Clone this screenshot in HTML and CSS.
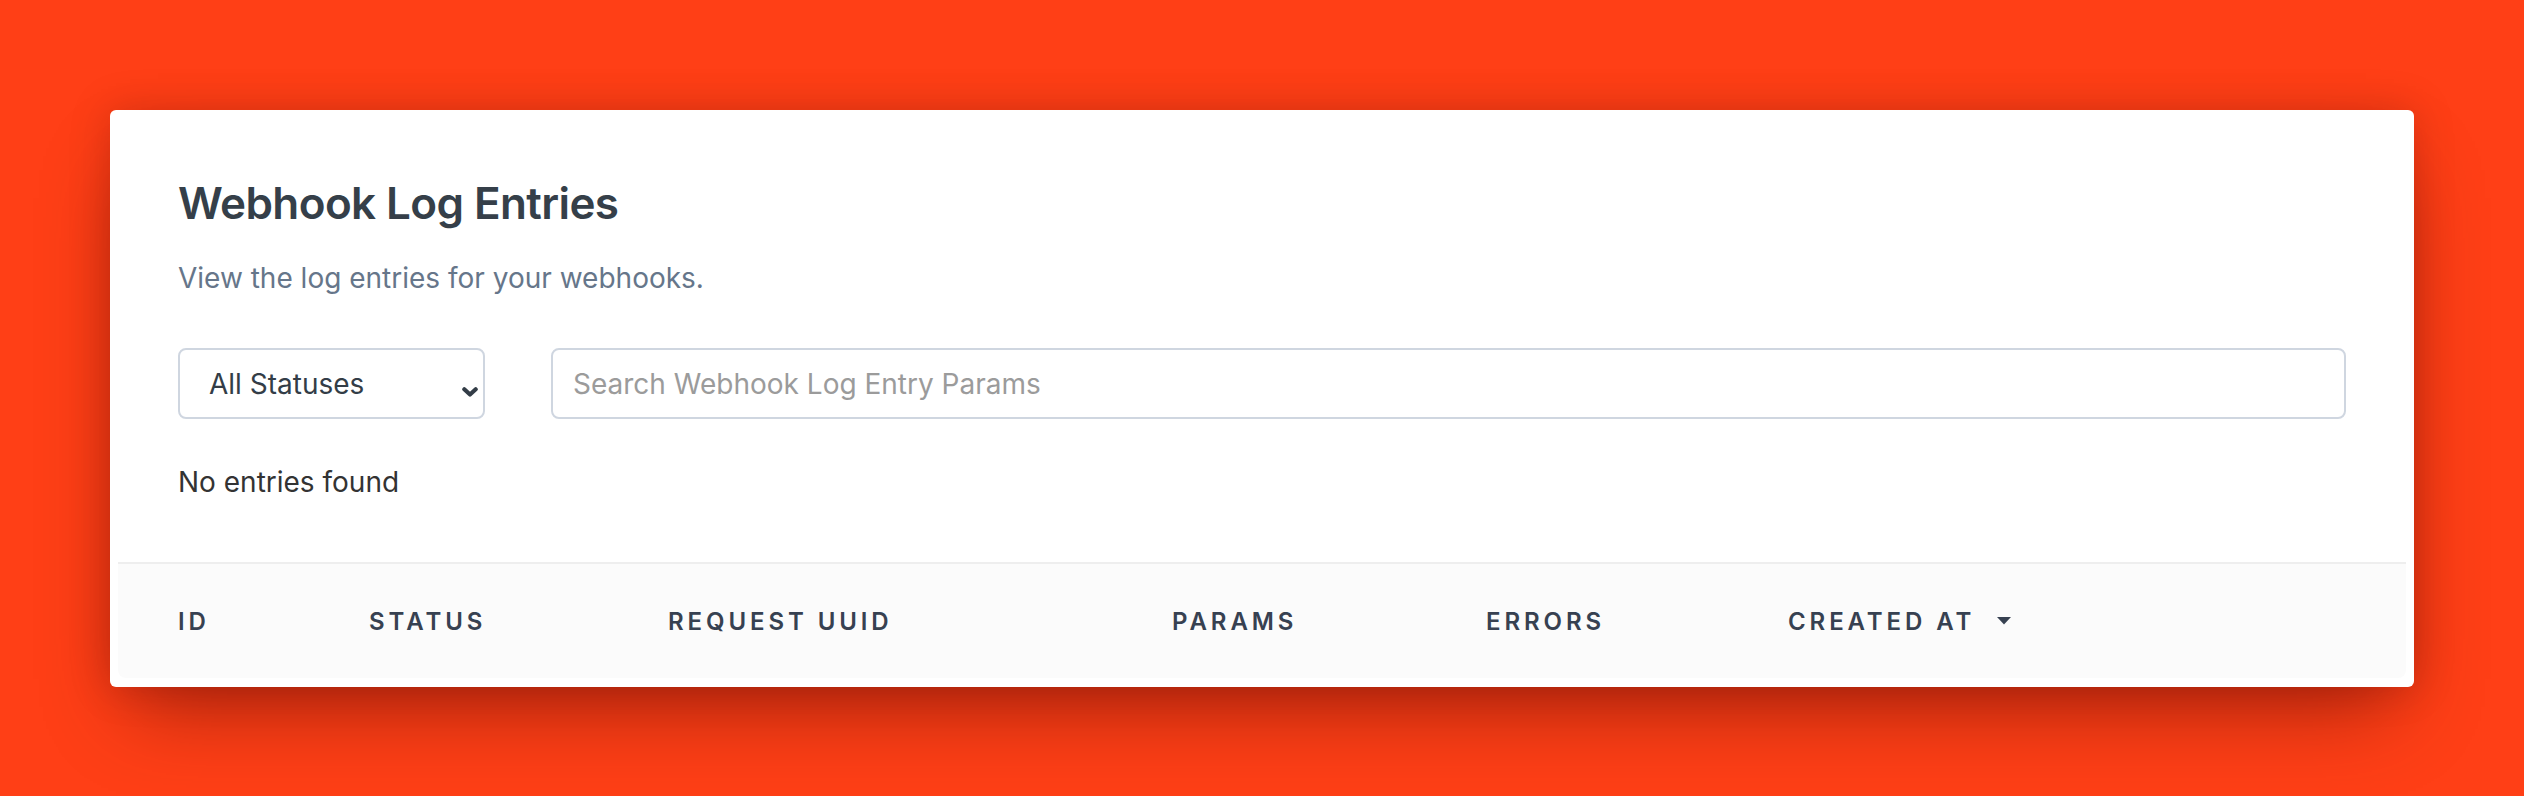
FILE: index.html
```html
<!DOCTYPE html>
<html lang="en">
<head>
<meta charset="utf-8">
<title>Webhook Log Entries</title>
<link rel="stylesheet" href="styles.css">
</head>
<body>
<main class="page">
  <section class="card">
    <div class="inner">
      <div class="intro">
        <h1 class="title">Webhook Log Entries</h1>
        <p class="subtitle">View the log entries for your webhooks.</p>
        <div class="filters">
          <div class="select-wrap">
            <select class="select">
              <option>All Statuses</option>
            </select>
            <svg class="chevron" viewBox="0 0 16 10" width="16" height="10" aria-hidden="true"><path d="M2.3 2.3 L8 7.5 L13.7 2.3" fill="none" stroke="#333d47" stroke-width="4.2" stroke-linecap="round" stroke-linejoin="round"/></svg>
          </div>
          <input class="search" type="text" placeholder="Search Webhook Log Entry Params">
        </div>
        <p class="empty">No entries found</p>
      </div>
      <table class="table">
        <colgroup>
          <col class="c-id"><col class="c-status"><col class="c-uuid"><col class="c-params"><col class="c-errors"><col class="c-created">
        </colgroup>
        <thead>
          <tr>
            <th>ID</th>
            <th>Status</th>
            <th>Request UUID</th>
            <th>Params</th>
            <th>Errors</th>
            <th><span class="sort">Created At<svg class="caret" viewBox="0 0 14 8" width="14" height="8" aria-hidden="true"><path d="M0 0 H14 L7 7.5 Z" fill="#374151"/></svg></span></th>
          </tr>
        </thead>
      </table>
    </div>
  </section>
</main>
</body>
</html>
```

FILE: styles.css
```css
* { box-sizing: border-box; }

html, body {
  margin: 0;
  padding: 0;
}

body {
  background: #ff3f16;
  font-family: Inter, "Noto Sans", "Liberation Sans", sans-serif;
  width: 2524px;
  height: 796px;
  overflow: hidden;
}

.page {
  padding: 110px;
}

.card {
  background: #ffffff;
  border-radius: 6px;
  padding: 8px 8px 9px;
  box-shadow: 0 40px 80px -20px rgba(60, 0, 0, 0.45), 0 0 40px rgba(80, 10, 0, 0.22);
}

.inner {
  border-radius: 8px;
  overflow: hidden;
}

.intro {
  padding: 59px 60px 0;
}

.title {
  margin: 0;
  font-size: 44px;
  line-height: 53px;
  font-weight: 600;
  color: #353f49;
  letter-spacing: -0.6px;
}

.subtitle {
  margin: 31px 0 0;
  font-size: 28px;
  line-height: 34px;
  color: #66768a;
}

.filters {
  display: flex;
  gap: 66px;
  margin-top: 53px;
}

.select-wrap {
  position: relative;
  width: 307px;
  flex: none;
}

.select {
  appearance: none;
  -webkit-appearance: none;
  width: 100%;
  height: 71px;
  margin: 0;
  padding: 0 40px 0 29px;
  border: 2px solid #cfd6e0;
  border-radius: 8px;
  background: #ffffff;
  font-family: inherit;
  font-size: 28px;
  color: #333d47;
}

.chevron {
  position: absolute;
  left: 284px;
  top: 39px;
}

.search {
  flex: 1;
  height: 71px;
  margin: 0;
  padding: 0 20px;
  border: 2px solid #cfd6e0;
  border-radius: 8px;
  font-family: inherit;
  font-size: 28px;
  color: #333d47;
}

.search::placeholder {
  color: #9b9b9b;
}

.empty {
  margin: 46px 0 0;
  font-size: 28px;
  line-height: 34px;
  color: #333333;
}

.table {
  margin-top: 63px;
  width: 100%;
  border-collapse: collapse;
  table-layout: fixed;
}

.c-id { width: 251px; }
.c-status { width: 299px; }
.c-uuid { width: 504px; }
.c-params { width: 314px; }
.c-errors { width: 302px; }

.table th {
  background: #fbfbfb;
  border-top: 2px solid #eeeeee;
  height: 115px;
  padding: 0;
  text-align: left;
  font-size: 24px;
  font-weight: 600;
  letter-spacing: 3.9px;
  text-transform: uppercase;
  color: #374151;
  vertical-align: middle;
}

.table th:first-child {
  padding-left: 60px;
}

.sort {
  display: inline-flex;
  align-items: center;
  gap: 22px;
}

.caret {
  display: block;
}
```
